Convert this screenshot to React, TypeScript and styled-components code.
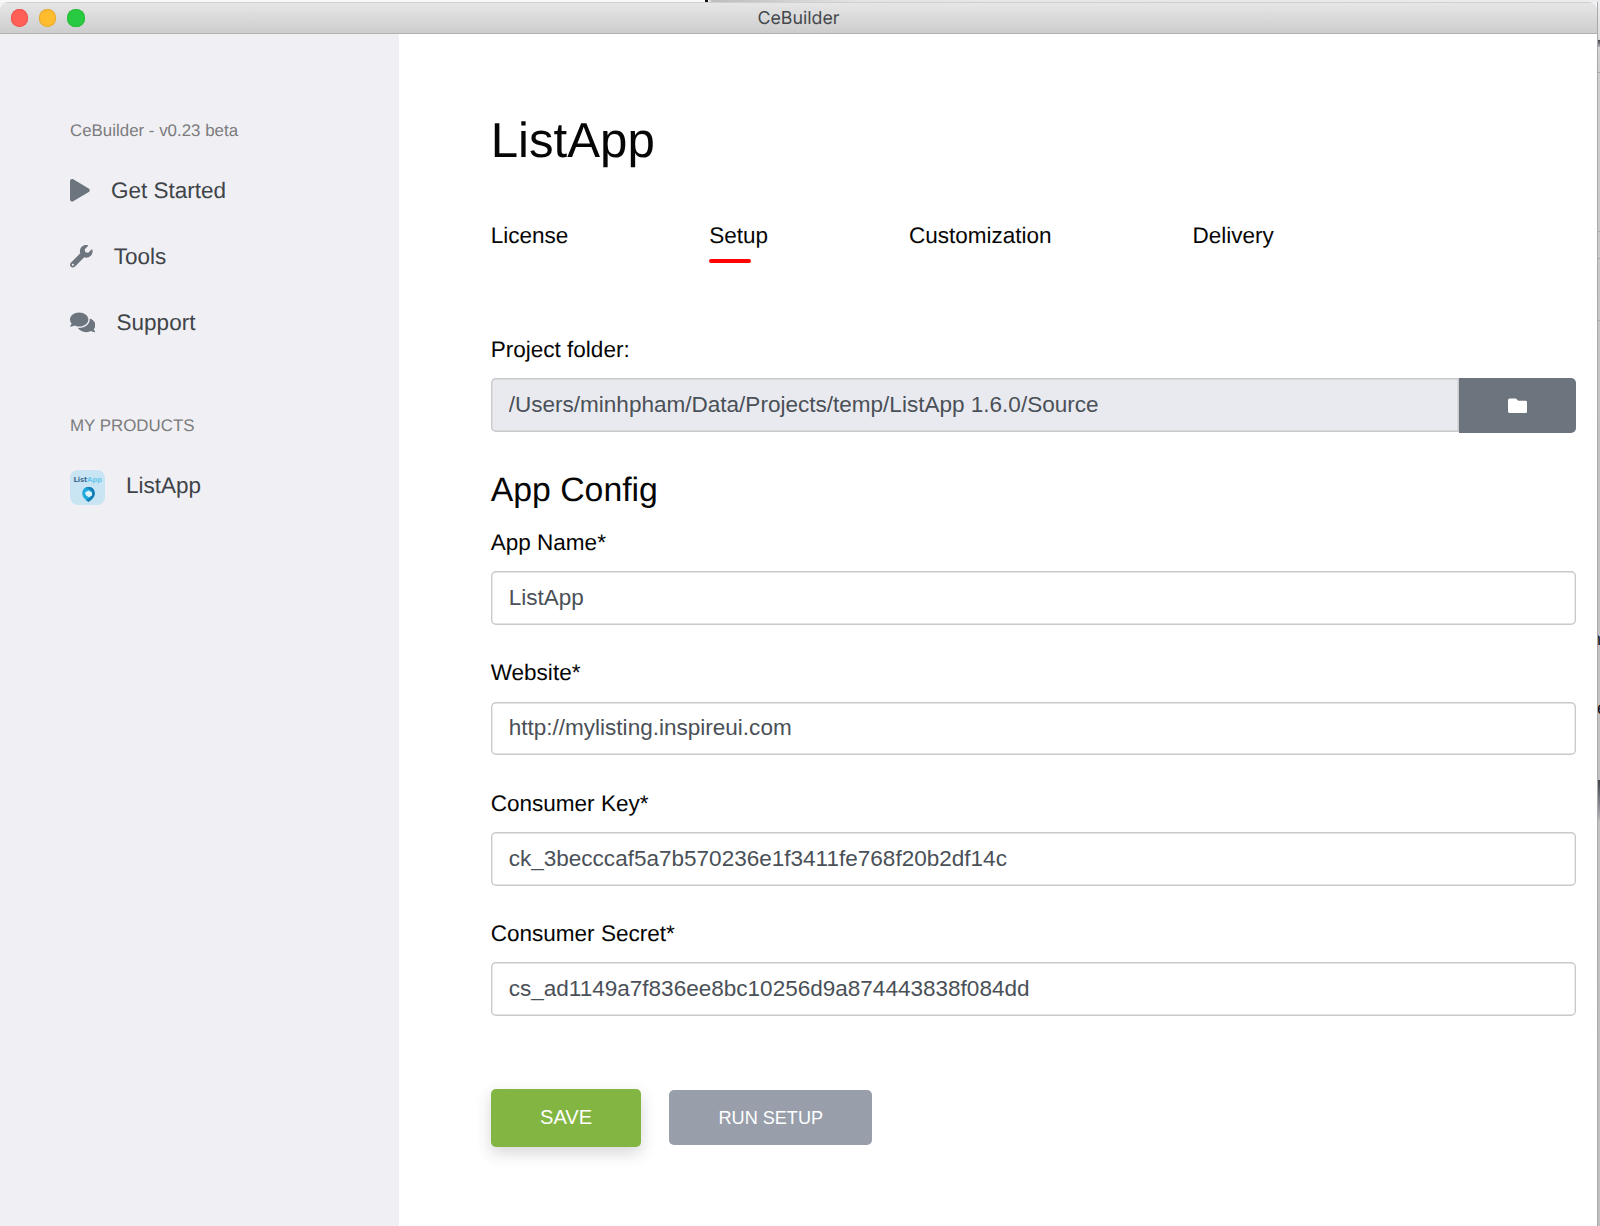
import React from 'react';
import styled, { createGlobalStyle } from 'styled-components';
import { FaComments, FaFolder, FaPlay, FaWrench } from 'react-icons/fa';

const GlobalStyle = createGlobalStyle`
  *, *::before, *::after { box-sizing: border-box; }
  body {
    margin: 0;
    overflow: hidden;
    background: #f3f3f3;
    font-family: 'Liberation Sans', Arial, sans-serif;
    text-rendering: geometricPrecision;
  }
`;

const Desktop = styled.div`
  display: grid;
  grid-template: 2px 1224px / 1597px 3px;
  width: 1600px;
  height: 1226px;
  overflow: hidden;
`;

const TopEdge = styled.div`
  grid-column: 1 / 3;
  padding-left: 705px;
  background: linear-gradient(90deg, #f8f8f8 708px, #bdbdbd 712px, #e4e4e6 860px, #ececef);
`;

const TopMark = styled.div`
  width: 3px;
  height: 2px;
  background: #111;
`;

const Window = styled.div`
  display: flex;
  flex-direction: column;
  border-radius: 8px 8px 0 0;
  background: #fff;
  overflow: hidden;
`;

const TitleBar = styled.header`
  display: grid;
  grid-template-columns: 1fr auto 1fr;
  align-items: center;
  flex: none;
  height: 32px;
  padding-left: 11px;
  border-top: 1px solid #cfcfcf;
  border-bottom: 1px solid #b1b1b1;
  background: linear-gradient(#e6e6e6, #cdcdcd);
`;

const Lights = styled.div`
  display: flex;
  gap: 11px;
`;

const Light = styled.span<{ $color: string; $ring: string }>`
  width: 17.2px;
  height: 17.2px;
  border-radius: 50%;
  background: ${(p) => p.$color};
  box-shadow: inset 0 0 0 1px ${(p) => p.$ring};
`;

const WindowTitle = styled.div`
  padding: 2px 11px 0 0;
  font: 17.8px/26px Inter, Roboto, sans-serif;
  color: #45484c;
`;

const Body = styled.div`
  display: flex;
  flex: 1;
`;

const Sidebar = styled.aside`
  width: 399px;
  flex: none;
  padding: 84.2px 0 0 70px;
  background: #efeff4;
  color: #404448;
`;

const Caption = styled.div`
  font-size: 16.9px;
  line-height: 26px;
  color: #7b7b7d;
`;

const Menu = styled.nav`
  display: flex;
  flex-direction: column;
  gap: 32px;
  margin: 30px 0 73.2px;
`;

const MenuItem = styled.a`
  display: flex;
  align-items: center;
  gap: 21.2px;
  height: 34px;
  font-size: 22.5px;
  line-height: 34px;
`;

const MenuIcon = styled.span<{ $width: number }>`
  display: flex;
  width: ${(p) => p.$width}px;
  height: 22.6px;
  margin-bottom: 1px;
  color: #6c757d;
  svg { display: block; width: 100%; height: 100%; }
`;

const Product = styled.a`
  display: flex;
  gap: 20.6px;
  margin-top: 29.6px;
  font-size: 22.5px;
  line-height: 34px;
`;

const AppIcon = styled.span`
  display: flex;
  flex-direction: column;
  align-items: center;
  width: 35.3px;
  height: 35.3px;
  margin-top: 0.6px;
  padding-top: 6px;
  border-radius: 8px;
  background: #c9e5f4;
  svg { display: block; margin: 2px 0 0 1px; }
`;

const AppIconName = styled.span`
  font: bold 7px/9px 'DejaVu Sans', sans-serif;
  letter-spacing: -0.25px;
  color: #3d6f92;
  span { color: #6cc8ec; }
`;

const Main = styled.main`
  flex: 1;
  padding: 77px 21.3px 0 91.7px;
  color: #060606;
`;

const PageTitle = styled.h1`
  margin: 0 0 48.3px;
  font-size: 49.2px;
  font-weight: 400;
  line-height: 60px;
`;

const Tabs = styled.div`
  display: flex;
  gap: 140.9px;
  height: 112.9px;
  font-size: 22.52px;
  line-height: 34px;
`;

const Tab = styled.div<{ $active?: boolean }>`
  &::after {
    content: '';
    display: ${(p) => (p.$active ? 'block' : 'none')};
    width: 42px;
    height: 4.3px;
    margin-top: 5.4px;
    border-radius: 3px;
    background: #fe0404;
  }
`;

const Field = styled.div`
  display: flex;
  flex-direction: column;
  gap: 12px;
`;

const Label = styled.label`
  height: 34px;
  padding-top: 0.7px;
  font-size: 22.54px;
  line-height: 34px;
`;

const FieldRow = styled.div`
  display: flex;
  align-items: flex-start;
`;

const Input = styled.input<{ $joined?: boolean }>`
  flex: 1;
  min-width: 0;
  height: 53.6px;
  padding: 0 18px;
  border: 0;
  outline: 0;
  border-radius: ${(p) => (p.$joined ? '5px 0 0 5px' : '5px')};
  background: ${(p) => (p.$joined ? '#e9eaef' : '#fff')};
  box-shadow: inset 0 0 0 1.4px #cacaca;
  color: #4a5057;
  font: 22.54px/34px 'Liberation Sans', Arial, sans-serif;
`;

const FolderButton = styled.button`
  display: flex;
  align-items: center;
  justify-content: center;
  width: 117px;
  height: 54.8px;
  padding: 0 0 0 1px;
  border: 0;
  border-radius: 0 5px 5px 0;
  background: #6c757d;
  color: #fff;
`;

const SectionTitle = styled.h2`
  height: 40px;
  margin: 36px 0 16.2px;
  padding-top: 0.7px;
  font-size: 33.8px;
  font-weight: 400;
  line-height: 40px;
`;

const Fields = styled.div`
  display: flex;
  flex-direction: column;
  gap: 30.8px;
`;

const Actions = styled.div`
  display: flex;
  align-items: center;
  gap: 28px;
  margin-top: 73px;
`;

const Button = styled.button<{ $primary?: boolean }>`
  width: ${(p) => (p.$primary ? '150.8px' : '202.6px')};
  height: ${(p) => (p.$primary ? '57.6px' : '54.6px')};
  padding: ${(p) => (p.$primary ? '0 0 1px' : '1px 0 0')};
  border: 0;
  border-radius: 5px;
  background: ${(p) => (p.$primary ? '#82b541' : '#989fab')};
  box-shadow: ${(p) => (p.$primary ? '0 6px 16px rgba(50, 50, 60, 0.2)' : 'none')};
  color: #fff;
  font: ${(p) => (p.$primary ? '20.1px' : '18.1px')} 'Liberation Sans', Arial, sans-serif;
`;

const RightEdge = styled.div`
  display: flex;
  flex-direction: column;
  border-left: 1px solid #a9a9a9;
  background: linear-gradient(#eeeef2, #cfcfcf 60px, #c4c4c4 400px, #c0c0c0);
  overflow: hidden;
`;

const EdgeLine = styled.div<{ $gap: number }>`
  flex: none;
  height: 1px;
  margin-top: ${(p) => p.$gap}px;
  background: #aaa;
`;

const EdgeMark = styled.div<{ $gap: number; $height: number }>`
  flex: none;
  height: ${(p) => p.$height}px;
  margin-top: ${(p) => p.$gap}px;
  background: linear-gradient(#3f4248, #6d7077 40%, #b5b5b9);
`;

const EdgeText = styled.div<{ $gap: number; $shift: number }>`
  flex: none;
  height: 20px;
  margin-top: ${(p) => p.$gap}px;
  font-size: 18px;
  line-height: 20px;
  text-indent: ${(p) => p.$shift}px;
  color: #151515;
`;

const menu = [
  { label: 'Get Started', Icon: FaPlay, width: 19.8 },
  { label: 'Tools', Icon: FaWrench, width: 22.6 },
  { label: 'Support', Icon: FaComments, width: 25.4 },
];

const fields = [
  { label: 'App Name*', value: 'ListApp' },
  { label: 'Website*', value: 'http://mylisting.inspireui.com' },
  { label: 'Consumer Key*', value: 'ck_3becccaf5a7b570236e1f3411fe768f20b2df14c' },
  { label: 'Consumer Secret*', value: 'cs_ad1149a7f836ee8bc10256d9a874443838f084dd' },
];

const tabs = ['License', 'Setup', 'Customization', 'Delivery'];

export default function App() {
  return (
    <Desktop>
      <GlobalStyle />
      <TopEdge>
        <TopMark />
      </TopEdge>
      <Window>
        <TitleBar>
          <Lights>
            <Light $color="#ff5f57" $ring="#f0564f" />
            <Light $color="#ffbd2e" $ring="#e6a935" />
            <Light $color="#28ca41" $ring="#2bba3c" />
          </Lights>
          <WindowTitle>CeBuilder</WindowTitle>
        </TitleBar>
        <Body>
          <Sidebar>
            <Caption>CeBuilder - v0.23 beta</Caption>
            <Menu>
              {menu.map(({ label, Icon, width }) => (
                <MenuItem key={label}>
                  <MenuIcon $width={width}>
                    <Icon />
                  </MenuIcon>
                  {label}
                </MenuItem>
              ))}
            </Menu>
            <Caption>MY PRODUCTS</Caption>
            <Product>
              <AppIcon>
                <AppIconName>
                  List<span>App</span>
                </AppIconName>
                <svg width="13" height="16" viewBox="0 0 13 16">
                  <path d="M6.5 0C2.500 0 .3 2.700.3 6.300c0 4 3 6.300 6.200 8.700 3.200-2.400 6.200-4.700 6.200-8.700C12.700 2.700 10.500 0 6.500 0z" fill="#20a9dc" />
                  <path d="M6.500 0c4 0 6.200 2.700 6.200 6.300 0 4-3 6.300-6.200 8.700l-2.500-2c3.500-1.500 6-3.500 6-6.700C10 3.500 8 1.500 3.500 1 4.400.3 5.400 0 6.500 0z" fill="#147db6" />
                  <path d="M3 5.500 6.500 3.500 10 5.500v3L6.800 10.200 3.800 8.200z" fill="#dff3fb" />
                </svg>
              </AppIcon>
              ListApp
            </Product>
          </Sidebar>
          <Main>
            <PageTitle>ListApp</PageTitle>
            <Tabs>
              {tabs.map((tab) => (
                <Tab key={tab} $active={tab === 'Setup'}>
                  {tab}
                </Tab>
              ))}
            </Tabs>
            <Field>
              <Label>Project folder:</Label>
              <FieldRow>
                <Input $joined readOnly value="/Users/minhpham/Data/Projects/temp/ListApp 1.6.0/Source" />
                <FolderButton>
                  <FaFolder size={19.4} />
                </FolderButton>
              </FieldRow>
            </Field>
            <SectionTitle>App Config</SectionTitle>
            <Fields>
              {fields.map((field) => (
                <Field key={field.label}>
                  <Label>{field.label}</Label>
                  <FieldRow>
                    <Input defaultValue={field.value} />
                  </FieldRow>
                </Field>
              ))}
            </Fields>
            <Actions>
              <Button $primary>SAVE</Button>
              <Button>RUN SETUP</Button>
            </Actions>
          </Main>
        </Body>
      </Window>
      <RightEdge>
        <EdgeMark $gap={38} $height={7} />
        <EdgeLine $gap={25} />
        <EdgeLine $gap={158} />
        <EdgeLine $gap={26} />
        <EdgeLine $gap={61} />
        <EdgeText $gap={308} $shift={-7}>n</EdgeText>
        <EdgeText $gap={49} $shift={-1}>e</EdgeText>
        <EdgeMark $gap={62} $height={40} />
      </RightEdge>
    </Desktop>
  );
}
